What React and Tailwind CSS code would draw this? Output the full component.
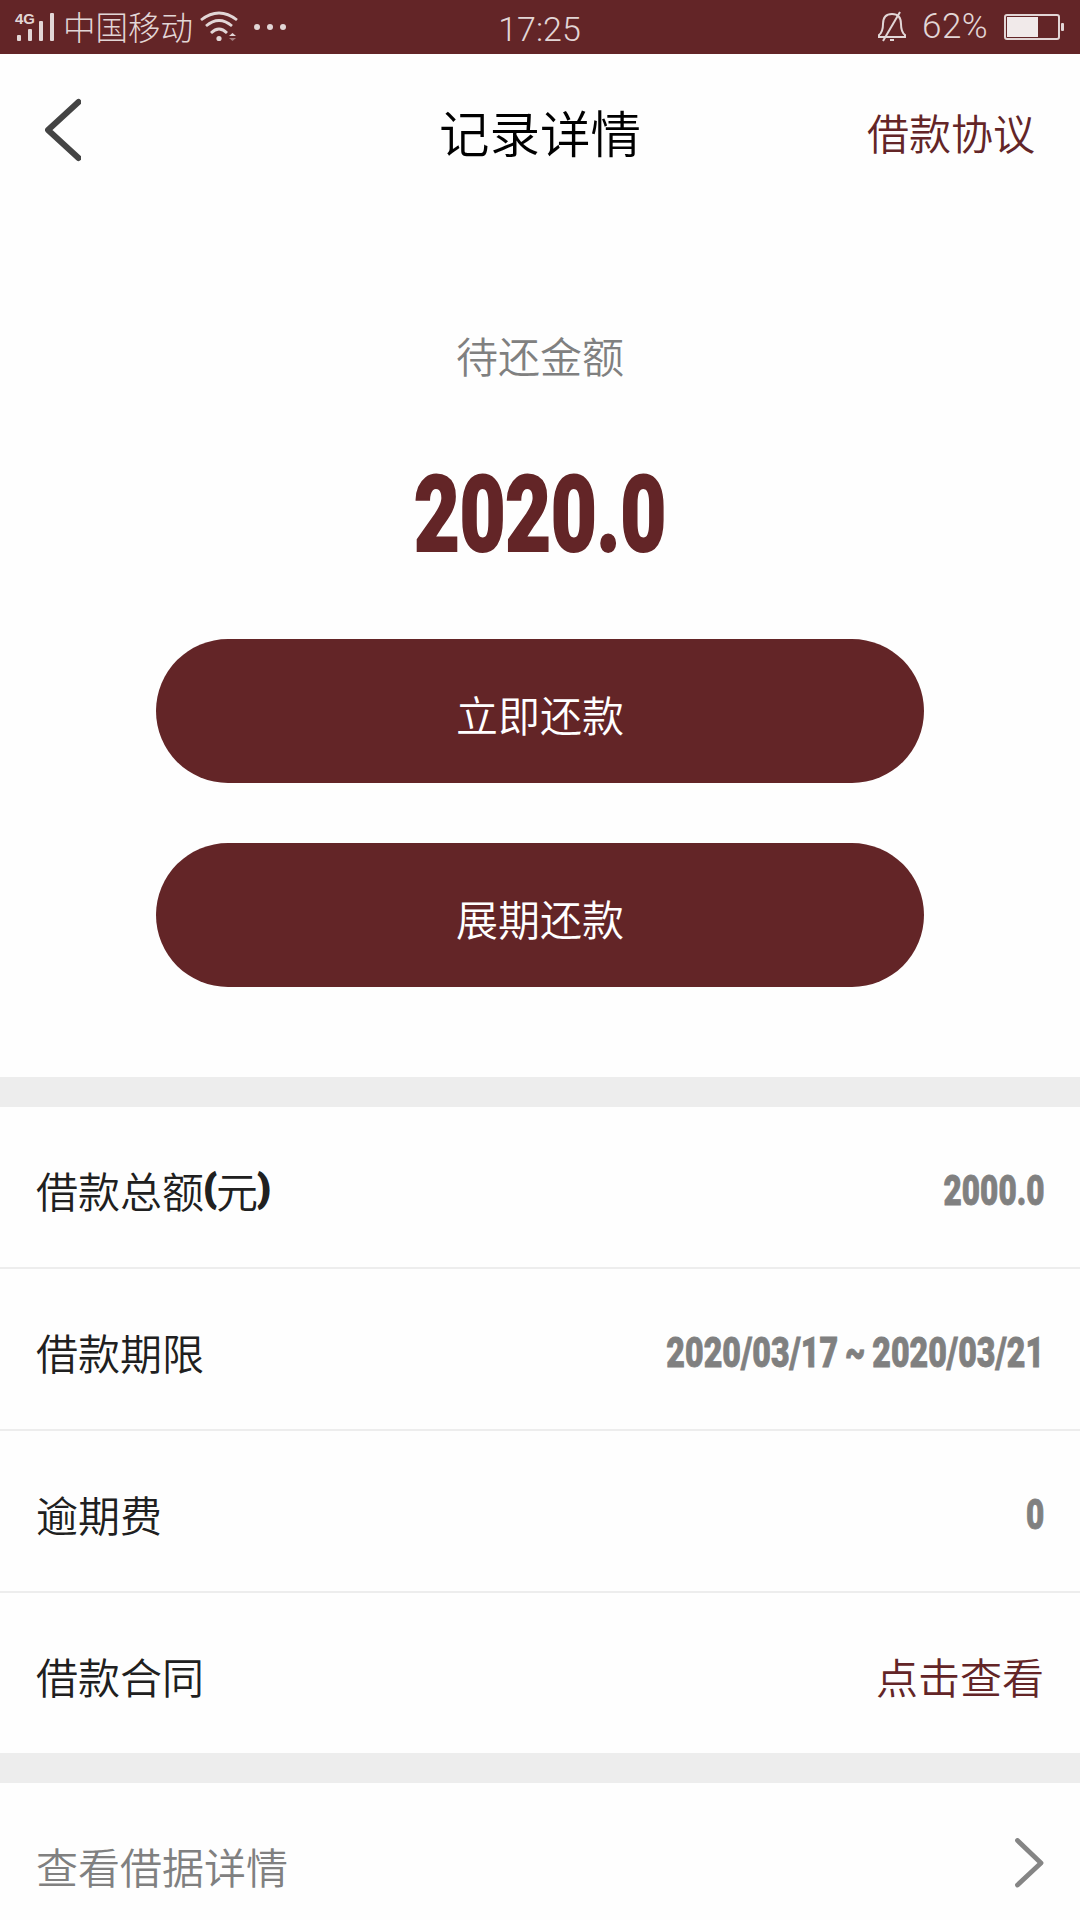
import { useState } from 'react';

const rows = [
  { label: '借款总额', unit: '元', value: '2000.0', type: 'number' },
  { label: '借款期限', value: ['2020/03/17', '~', '2020/03/21'], type: 'range' },
  { label: '逾期费', value: '0', type: 'number' },
  { label: '借款合同', value: '点击查看', type: 'link' },
];

function StatusBar() {
  return (
    <div className="h-[54px] bg-[#632527] text-[#e2d6d6] flex items-center justify-between pl-[15px] pr-4">
      <div className="w-[484px] flex items-center">
        <div className="relative w-[40px] h-[32px]">
          <span className="absolute left-0 top-0 text-[15px] leading-[15px] font-bold font-['Liberation_Sans']">4G</span>
          <svg className="mt-px" width="40" height="32" viewBox="0 0 40 32" fill="currentColor">
            <rect x="2" y="23" width="4" height="6" rx="1" />
            <rect x="13" y="17" width="4" height="12" rx="1" />
            <rect x="24" y="9" width="4" height="20" rx="1" />
            <rect x="35" y="1" width="4" height="28" rx="1" />
          </svg>
        </div>
        <span className="ml-[8px] -mt-[2px] text-[32.5px] leading-[54px] font-light">中国移动</span>
        <svg className="ml-[7px]" width="38" height="32" viewBox="0 0 38 32" fill="none" stroke="currentColor" strokeWidth="2.8">
          <path d="M1 9 Q19 -5 37 9" />
          <path d="M6 15 Q19 4 32 15" />
          <path d="M11 22 Q19 14 27 22" />
          <circle cx="19" cy="27.500" r="2.6" fill="currentColor" stroke="none" />
          <path d="M29 25 L32.500 22 L36 25Z" fill="currentColor" stroke="none" />
          <path d="M29 27 L32.500 30 L36 27Z" fill="currentColor" stroke="none" opacity=".5" />
        </svg>
        <div className="ml-4 flex gap-[7px]">
          <i className="size-[6px] rounded-full bg-current" />
          <i className="size-[6px] rounded-full bg-current" />
          <i className="size-[6px] rounded-full bg-current" />
        </div>
      </div>
      <span className="text-[34px] leading-[54px] pt-1 font-['Roboto'] font-[350]">17:25</span>
      <div className="w-[484px] flex items-center justify-end">
        <svg width="28" height="32" viewBox="0 0 28 32" fill="none" stroke="currentColor" strokeWidth="2">
          <path d="M1 26 V24 Q5 21 5 13 Q5 3 14 3 Q23 3 23 13 Q23 21 27 24 V26 Z" />
          <path d="M5 30 L22 1" />
          <path d="M12 29 H16" />
        </svg>
        <span className="ml-4 text-[35px] leading-[54px] tracking-[.4px] font-['Roboto'] font-[350]">62%</span>
        <svg className="ml-4" width="60" height="26" viewBox="0 0 60 26">
          <rect x="1" y="1" width="54" height="24" rx="2" fill="none" stroke="currentColor" strokeWidth="2" />
          <rect x="3" y="3" width="31" height="20" fill="#f1eaea" />
          <rect x="57" y="9" width="3" height="8" rx="1" fill="currentColor" />
        </svg>
      </div>
    </div>
  );
}

function Value({ row }) {
  if (row.type === 'link') {
    return <a className="text-[42px] text-[#632527]">{row.value}</a>;
  }
  if (row.type === 'range') {
    return (
      <span className="flex gap-[9px] pt-[3px] origin-right scale-x-[.766] font-['Roboto'] font-black text-[42px] text-[#808080] [-webkit-text-stroke:0.8px_#808080]">
        {row.value.map((part, i) => (
          <span key={i}>{part}</span>
        ))}
      </span>
    );
  }
  return (
    <span className="pt-[3px] origin-right scale-x-75 font-['Roboto'] font-black text-[42px] text-[#808080] [-webkit-text-stroke:0.8px_#808080]">
      {row.value}
    </span>
  );
}

export default function App() {
  const [loan] = useState({ amount: '2020.0' });

  return (
    <div className="w-[1080px] h-[1920px] overflow-hidden bg-[#fefefe] font-['Noto_Sans_CJK_SC',sans-serif] font-[350]">
      <StatusBar />

      <header className="h-[156px] flex items-center justify-between px-[45px]">
        <div className="w-[240px] pb-1">
          <svg width="36" height="64" viewBox="0 0 36 64" fill="none" stroke="#444" strokeWidth="6" strokeLinecap="round" strokeLinejoin="round">
            <path d="M33.500 4 L3 32 L33.500 60" />
          </svg>
        </div>
        <h1 className="-mt-[3px] text-[50.5px] leading-[60px] font-[350] text-black">记录详情</h1>
        <a className="w-[240px] text-right text-[42px] leading-[60px] text-[#632527]">借款协议</a>
      </header>

      <section className="h-[867px] flex flex-col items-center pt-[115px]">
        <p className="text-[42px] leading-[60px] text-[#808080]">待还金额</p>
        <p className="mt-[68px] scale-x-[.75] font-['Roboto'] font-black text-[105px] leading-[126px] text-[#632527] [-webkit-text-stroke:2px_#632527]">{loan.amount}</p>
        <button className="mt-[60px] w-[768px] h-[144px] rounded-full bg-[#632527] text-white text-[42px] pt-1">立即还款</button>
        <button className="mt-[60px] w-[768px] h-[144px] rounded-full bg-[#632527] text-white text-[42px] pt-1">展期还款</button>
      </section>

      <div className="h-[30px] bg-[#ededed]" />

      <ul className="divide-y-2 divide-[#ededed]">
        {rows.map((row) => (
          <li key={row.label} className="h-[162px] last:h-[160px] px-9 pt-1 flex items-center justify-between">
            <span className="flex items-center text-[42px] text-[#202020]">
              {row.label}
              {row.unit && (
                <>
                  <b className="w-[12px] flex justify-center font-['Roboto'] font-black text-[36px] [-webkit-text-stroke:1.5px_#202020]">(</b>
                  {row.unit}
                  <b className="w-[12px] flex justify-center font-['Roboto'] font-black text-[36px] [-webkit-text-stroke:1.5px_#202020]">)</b>
                </>
              )}
            </span>
            <Value row={row} />
          </li>
        ))}
      </ul>

      <div className="h-[30px] bg-[#ededed]" />

      <div className="h-[160px] px-9 flex items-center justify-between">
        <span className="pt-1 text-[42px] text-[#808080]">查看借据详情</span>
        <svg width="30" height="50" viewBox="0 0 30 50" fill="none" stroke="#858585" strokeWidth="4.8" strokeLinecap="round" strokeLinejoin="round">
          <path d="M3.500 2.500 L27 25 L3.500 47" />
        </svg>
      </div>
    </div>
  );
}
